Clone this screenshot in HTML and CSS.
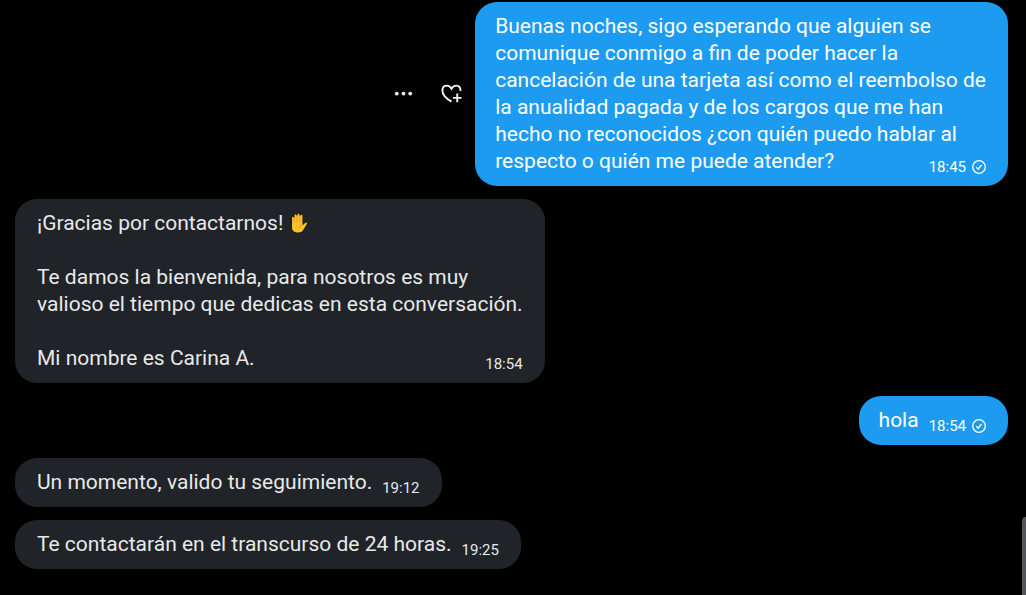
FILE: index.html
```
<!DOCTYPE html>
<html lang="es">
<head>
    <meta charset="UTF-8">
    <meta name="viewport" content="width=device-width, initial-scale=1.0">
    <title>Mensajes</title>
    <link rel="stylesheet" href="styles.css">
</head>
<body>

<main class="chat">

    <div class="message sent">
        <div class="actions">
            <button type="button" class="icon-btn" aria-label="Más opciones">
                <svg width="23" height="23" viewBox="0 0 24 24" fill="currentColor">
                    <circle cx="5" cy="11" r="2"/>
                    <circle cx="12" cy="11" r="2"/>
                    <circle cx="19" cy="11" r="2"/>
                </svg>
            </button>
            <button type="button" class="icon-btn" aria-label="Reaccionar">
                <svg width="23" height="23" viewBox="0 0 24 24" fill="none" stroke="currentColor" stroke-width="2">
                    <path d="M12 19.500C6.200 16 2.500 12 2.500 7.700C2.500 4.500 4.600 2.700 7.100 2.700C9.200 2.700 10.900 3.900 12 6C13.100 3.900 14.800 2.700 16.900 2.700C19.400 2.700 21.500 4.500 21.500 8.400"/>
                    <path d="M18 11v9M13.500 15.500h9"/>
                </svg>
            </button>
        </div>
        <div class="bubble">
            Buenas noches, sigo esperando que alguien se<br>
            comunique conmigo a fin de poder hacer la<br>
            cancelación de una tarjeta así como el reembolso de<br>
            la anualidad pagada y de los cargos que me han<br>
            hecho no reconocidos ¿con quién puedo hablar al<br>
            respecto o quién me puede atender?
            <span class="meta">
                <time>18:45</time>
                <svg class="check" viewBox="0 0 14 14" fill="none" stroke="currentColor">
                    <circle cx="7" cy="7" r="6.300" stroke-width="1.300"/>
                    <path d="M4.300 7.300l1.900 1.900 3.400-4.300" stroke-width="1.400"/>
                </svg>
            </span>
        </div>
    </div>

    <div class="message received">
        <div class="bubble">
            ¡Gracias por contactarnos!
            <svg class="hand" viewBox="0 0 20 22" role="img" aria-label="Mano levantada">
                <path d="M2.500 6C2.500 3.800 5 3.800 5 5.300V3.500C5 1.500 8 1.500 8 3.300V2.400C8 .7 11 .7 11 2.400V3.500C11 1.900 14 1.900 14 3.800V12.500L16 10.500C17.400 9.100 19.300 10.300 18.400 11.900L14.800 17.900C13.500 20 11.800 21 9 21C4.800 21 2.500 18.700 2.500 15Z" fill="#fdc02f" stroke="#17110a" stroke-width="1"/>
                <path d="M5 5v6M8 3.500V11M11 3.500V11M14 12.500c-2.500.3-4 1.500-4 4" fill="none" stroke="#e08a1c" stroke-width="0.700"/>
            </svg><br>
            <br>
            Te damos la bienvenida, para nosotros es muy<br>
            valioso el tiempo que dedicas en esta conversación.<br>
            <br>
            Mi nombre es Carina A.
            <span class="meta"><time>18:54</time></span>
        </div>
    </div>

    <div class="message sent">
        <div class="bubble">
            hola
            <span class="meta">
                <time>18:54</time>
                <svg class="check" viewBox="0 0 14 14" fill="none" stroke="currentColor">
                    <circle cx="7" cy="7" r="6.300" stroke-width="1.300"/>
                    <path d="M4.300 7.300l1.900 1.900 3.400-4.300" stroke-width="1.400"/>
                </svg>
            </span>
        </div>
    </div>

    <div class="message received">
        <div class="bubble">
            Un momento, valido tu seguimiento.
            <span class="meta"><time>19:12</time></span>
        </div>
    </div>

    <div class="message received">
        <div class="bubble">
            Te contactarán en el transcurso de 24 horas.
            <span class="meta"><time>19:25</time></span>
        </div>
    </div>

</main>

<div class="scroll-thumb"></div>

</body>
</html>
```
FILE: styles.css
```
body {
    margin: 0;
    background-color: #000;
    color: #e7e9ea;
    font-family: Roboto, "Liberation Sans", sans-serif;
    font-size: 21px;
    line-height: 27px;
}
.chat {
    display: flex;
    flex-direction: column;
    gap: 13px;
    padding: 2px 18px 26px 15px;
}
.message {
    display: flex;
    align-items: center;
}
.sent {
    justify-content: flex-end;
}
.bubble {
    padding: 11px 22px;
    border-radius: 22px;
    background-color: #202327;
}
.sent .bubble {
    padding-left: 20px;
    background-color: #1d9bf0;
    color: #fff;
}
.meta {
    float: right;
    display: flex;
    align-items: center;
    gap: 6px;
    margin-top: 11px;
    margin-left: 10px;
    font-size: 15px;
    line-height: 16px;
}
.check {
    width: 14px;
    height: 14px;
}
.hand {
    width: 20px;
    height: 22px;
    vertical-align: -4px;
}
.actions {
    display: flex;
    gap: 25px;
    margin-right: 12px;
}
.icon-btn {
    display: flex;
    padding: 0;
    border: none;
    background: none;
    color: #eff3f4;
    cursor: pointer;
}
.scroll-thumb {
    position: fixed;
    right: 0;
    bottom: 0;
    width: 4px;
    height: 78px;
    border-top-left-radius: 4px;
    background-color: #55555c;
}
```
